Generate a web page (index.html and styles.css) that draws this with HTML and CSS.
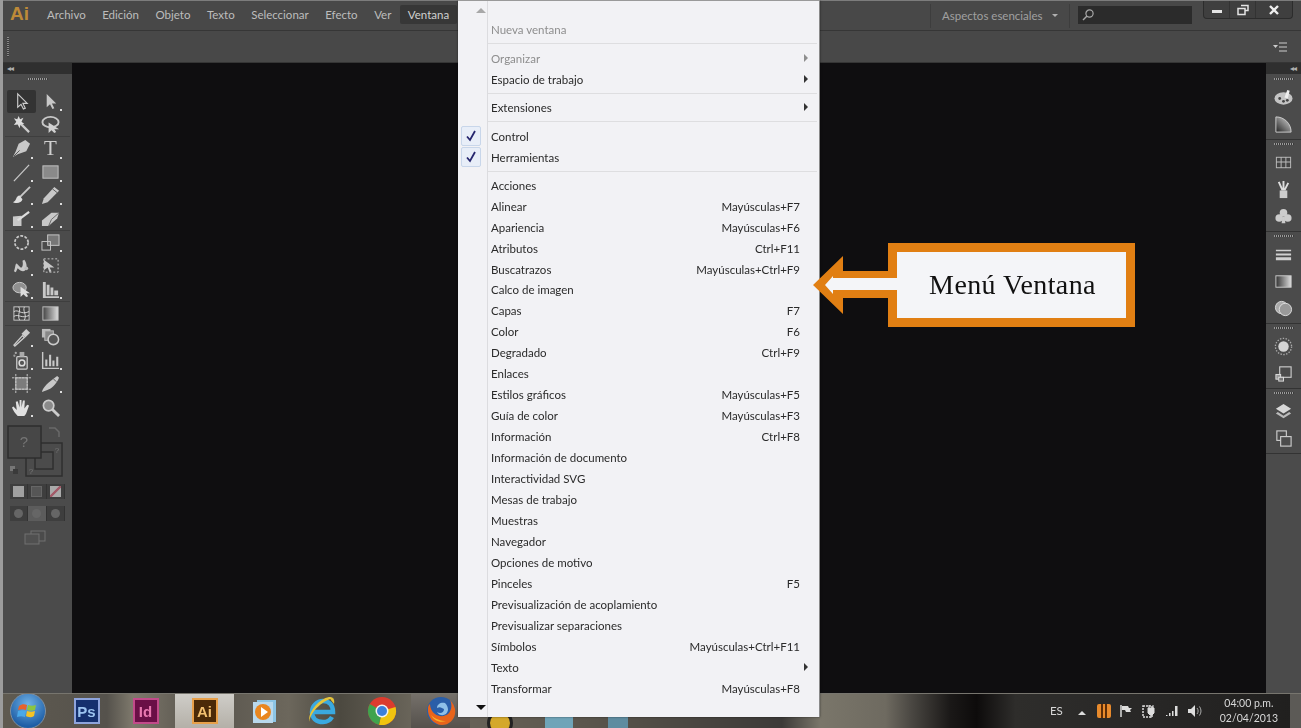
FILE: index.html
```html
<!DOCTYPE html>
<html lang="es">
<head>
    <meta charset="UTF-8">
    <meta name="viewport" content="width=device-width, initial-scale=1.0">
    <title>Menú Ventana</title>
    <link rel="stylesheet" href="styles.css">
</head>
<body>
    <div class="app">
        <header class="menubar">
            <span class="logo">Ai</span>
            <nav class="mainmenu">
                <span>Archivo</span>
                <span>Edición</span>
                <span>Objeto</span>
                <span>Texto</span>
                <span>Seleccionar</span>
                <span>Efecto</span>
                <span>Ver</span>
                <span class="open">Ventana</span>
            </nav>
            <div class="workspace-switch">
                <span>Aspectos esenciales</span>
                <i class="caret"></i>
            </div>
            <div class="search">
                <svg viewBox="0 0 14 14" width="14" height="14"><circle cx="8.5" cy="5.5" r="3.6" fill="none" stroke="#a8a8a8" stroke-width="1.2"/><path d="M6 8 2 12" stroke="#a8a8a8" stroke-width="1.5"/></svg>
            </div>
            <div class="winbtns">
                <span class="winbtn min"><svg viewBox="0 0 12 12" width="12" height="12"><rect x="1" y="6" width="10" height="3" fill="#e4e4e4"/></svg></span>
                <span class="winbtn max"><svg viewBox="0 0 12 12" width="12" height="12"><path d="M4 1.5h7v5H8.500M1 4.500h7v6H1z" fill="none" stroke="#e4e4e4" stroke-width="1.500"/></svg></span>
                <span class="winbtn close"><svg viewBox="0 0 12 12" width="12" height="12"><path d="M2 2l8 8M10 2l-8 8" stroke="#eee" stroke-width="2.400"/></svg></span>
            </div>
        </header>

        <div class="controlbar">
            <i class="vgrip"></i>
            <svg class="panelmenu" viewBox="0 0 14 10" width="14" height="10"><path d="M0 3h5L2.500 6z" fill="#ccc"/><path d="M6 1h8M6 5h8M6 9h8" stroke="#ccc"/></svg>
        </div>

        <div class="workspace">
            <aside class="tools">
                <div class="dockhead"><span>◂◂</span></div>
                <i class="grip"></i>
                <div class="toolgroup">
                    <span class="tool active"><svg viewBox="0 0 20 20"><path d="M6 2v14l3.500-3 2.500 5 2-1-2.500-5H16z" fill="none" stroke="#ccc" stroke-width="1.200"/></svg></span>
                    <span class="tool more"><svg viewBox="0 0 20 20"><path d="M6 2v14l3.500-3 2.500 5 2-1-2.500-5H16z" fill="#c8c8c8"/></svg></span>
                    <span class="tool"><svg viewBox="0 0 20 20"><path d="M8 8l10 10" stroke="#ccc" stroke-width="2.400"/><path d="M7 1l1.500 3.500L12 3l-2 4 3 2.500-4 .2L8 14 6 10l-4 .5L4.500 7 2 3.500l3.500 1z" fill="#ddd"/></svg></span>
                    <span class="tool"><svg viewBox="0 0 20 20"><ellipse cx="10" cy="7.500" rx="8.500" ry="5.500" fill="none" stroke="#c8c8c8" stroke-width="2"/><path d="M8 8v11l3-3 3 3 2-1-2-3h5z" fill="#d0d0d0"/></svg></span>
                </div>
                <div class="toolgroup">
                    <span class="tool more"><svg viewBox="0 0 20 20"><path d="M14 1l5 4-4 8-9 3-5 3 3-6 3-8z" fill="#c8c8c8"/><path d="M2 18l6-6" stroke="#555"/></svg></span>
                    <span class="tool more type-tool">T</span>
                    <span class="tool more"><svg viewBox="0 0 20 20"><path d="M2 19 18 2" stroke="#c8c8c8" stroke-width="1.300"/></svg></span>
                    <span class="tool more"><svg viewBox="0 0 20 20"><rect x="2" y="3" width="16" height="13" fill="#8a8a8a" stroke="#c4c4c4"/></svg></span>
                    <span class="tool more"><svg viewBox="0 0 20 20"><path d="M19 1 8 12" stroke="#c8c8c8" stroke-width="2"/><path d="M8 10c-4 0-3 6-7 7 4 2 9 1 10-3z" fill="#ddd"/></svg></span>
                    <span class="tool more"><svg viewBox="0 0 20 20"><path d="M14 1l5 4-12 12-6 2 2-6z" fill="#c8c8c8"/><path d="M12 3l5 4" stroke="#555"/></svg></span>
                    <span class="tool more"><svg viewBox="0 0 20 20"><path d="M1 8l9-1v11H1z" fill="#c8c8c8"/><path d="M6 12 18 3" stroke="#ddd" stroke-width="2.400"/></svg></span>
                    <span class="tool more"><svg viewBox="0 0 20 20"><path d="M1 12 11 4h8l-2 6-9 8H1z" fill="#c8c8c8"/><path d="M8 18l3-7 8-7" fill="none" stroke="#666"/></svg></span>
                </div>
                <div class="toolgroup">
                    <span class="tool more"><svg viewBox="0 0 20 20"><circle cx="10" cy="10" r="7" fill="none" stroke="#c8c8c8" stroke-width="1.800" stroke-dasharray="3 1.500"/></svg></span>
                    <span class="tool more"><svg viewBox="0 0 20 20"><rect x="7" y="2" width="12" height="11" fill="#777" stroke="#c8c8c8"/><rect x="1" y="9" width="9" height="9" fill="none" stroke="#c8c8c8"/></svg></span>
                    <span class="tool more"><svg viewBox="0 0 20 20"><path d="M2 16c2-4 1-8 3-8l4 4c2 1 3-3 2-7l2-1c3 4 3 9 1 11-2 2-5 1-8-2l-2 4z" fill="#c8c8c8"/><circle cx="15" cy="13" r="2" fill="#bbb"/></svg></span>
                    <span class="tool"><svg viewBox="0 0 20 20"><rect x="3" y="3" width="15" height="14" fill="none" stroke="#c8c8c8" stroke-dasharray="2 2"/><path d="M3 4v11l4-3 2 5 2-1-2-4h5z" fill="#c8c8c8"/></svg></span>
                    <span class="tool more"><svg viewBox="0 0 20 20"><ellipse cx="8" cy="8" rx="7" ry="5.500" fill="#8f8f8f" stroke="#ccc"/><path d="M9 7v11l3-3 3 3 2-1-2-3h4z" fill="#ddd"/></svg></span>
                    <span class="tool more"><svg viewBox="0 0 20 20"><path d="M2 2h3v15h14v2H2zM6 5h3v11H6zM10 8h3v8h-3zM14 11h4v5h-4z" fill="#c8c8c8"/></svg></span>
                </div>
                <div class="toolgroup">
                    <span class="tool"><svg viewBox="0 0 20 20"><rect x="2" y="3" width="16" height="14" fill="#444" stroke="#c8c8c8"/><path d="M2 8c5-3 7 4 16 0M2 13c5-3 8 3 16-1M7 3c3 4-2 8 1 14M13 3c-2 5 3 8 0 14" fill="none" stroke="#d8d8d8"/></svg></span>
                    <span class="tool"><svg viewBox="0 0 20 20"><defs><linearGradient id="gradTool"><stop offset="0" stop-color="#444"/><stop offset="1" stop-color="#ddd"/></linearGradient></defs><rect x="2" y="3" width="16" height="14" fill="url(#gradTool)" stroke="#c0c0c0"/></svg></span>
                </div>
                <div class="toolgroup">
                    <span class="tool more"><svg viewBox="0 0 20 20"><path d="M2 18l9-10 2 2-10 9z" fill="none" stroke="#ccc" stroke-width="1.400"/><path d="M10 6l5-5 4 4-5 5z" fill="#ccc"/></svg></span>
                    <span class="tool"><svg viewBox="0 0 20 20"><rect x="1" y="1" width="9" height="9" fill="#bbb"/><rect x="4" y="3" width="9" height="10" fill="#888" stroke="#bbb"/><circle cx="13" cy="12" r="5.500" fill="#555" stroke="#ccc" stroke-width="1.600"/></svg></span>
                    <span class="tool more"><svg viewBox="0 0 20 20"><rect x="5" y="6" width="11" height="13" rx="1" fill="#555" stroke="#ccc" stroke-width="1.300"/><circle cx="10.500" cy="12.500" r="3" fill="none" stroke="#ddd" stroke-width="1.600"/><path d="M8 1h5v5H8z" fill="#aaa"/><circle cx="4" cy="2" r="1.200" fill="#aaa"/><circle cx="2.500" cy="5" r="1.200" fill="#999"/></svg></span>
                    <span class="tool more"><svg viewBox="0 0 20 20"><path d="M1 1h1.500v16.500H19V19H1zM4.500 9h2.200v7H4.500zM8.500 4h2.200v12H8.500zM12 10h2.200v6H12zM16 6h2.200v10H16z" fill="#c8c8c8"/></svg></span>
                    <span class="tool"><svg viewBox="0 0 20 20"><rect x="4" y="4" width="12" height="12" fill="#7c7c7c" stroke="#bbb"/><path d="M4 0v20M16 0v20M0 4h20M0 16h20" stroke="#c8c8c8" stroke-dasharray="2.500 1"/></svg></span>
                    <span class="tool more"><svg viewBox="0 0 20 20"><path d="M1 19c1-5 6-10 16-17l2 2c-3 7-8 12-13 13z" fill="#c8c8c8"/><path d="M13 5l3 3" stroke="#555"/></svg></span>
                    <span class="tool more"><svg viewBox="0 0 20 20"><path d="M6 19c-2-2-5-6-6-9l1.500-1 3.500 3.500L4 4l2-.5L8 10V2h2v8l1.500-7.500h2L13 11l3-4 2 1-3 8c-1 2-2 3-3 3z" fill="#e0e0e0"/></svg></span>
                    <span class="tool"><svg viewBox="0 0 20 20"><circle cx="8" cy="8" r="5.500" fill="#8a8a8a" stroke="#ccc" stroke-width="1.800"/><path d="M12 12l7 7" stroke="#ccc" stroke-width="3"/></svg></span>
                </div>
                <div class="colorbox">
                    <svg viewBox="0 0 60 56" width="60" height="56">
                        <rect x="19" y="18" width="36" height="33" fill="none" stroke="#2f2f2f" stroke-width="1.500"/>
                        <rect x="28" y="27" width="18" height="17" fill="none" stroke="#2f2f2f" stroke-width="1.500"/>
                        <rect x="1" y="1" width="33" height="32" fill="#474747" stroke="#2e2e2e" stroke-width="1.500"/>
                        <text x="17" y="22" text-anchor="middle" class="unknown">?</text>
                        <text x="24" y="49" text-anchor="middle" class="unknown small">?</text>
                        <text x="50" y="28" text-anchor="middle" class="unknown small">?</text>
                        <rect x="3" y="41" width="5" height="5" fill="#777"/><rect x="6" y="44" width="5" height="5" fill="#3a3a3a"/>
                        <path d="M42 3h6l4 4v5" fill="none" stroke="#6a6a6a" stroke-width="1.500"/>
                    </svg>
                </div>
                <div class="btnrow colors">
                    <span><i class="sw fill"></i></span>
                    <span><i class="sw grad"></i></span>
                    <span><i class="sw none"></i></span>
                </div>
                <div class="btnrow modes">
                    <span><i class="dot"></i></span>
                    <span class="on"><i class="dot"></i></span>
                    <span><i class="dot"></i></span>
                </div>
                <div class="screenmode">
                    <svg viewBox="0 0 22 16" width="22" height="16"><rect x="7" y="1" width="14" height="10" fill="none" stroke="#707070"/><rect x="1" y="4" width="14" height="10" fill="#505050" stroke="#707070"/></svg>
                </div>
            </aside>

            <main class="canvas"></main>

            <aside class="dock">
                <div class="dockhead right"><span>◂◂</span></div>
                <section class="dockgroup first">
                    <i class="grip"></i>
                    <span class="dockicon"><svg viewBox="0 0 20 20"><ellipse cx="10" cy="11" rx="9.500" ry="6.500" fill="#c4c4c4"/><circle cx="6" cy="11" r="1.500" fill="#444"/><circle cx="10" cy="14" r="1.500" fill="#444"/><circle cx="14" cy="13" r="1.500" fill="#444"/><path d="M11 10l3-8 2.500 1-2 8z" fill="#eee"/></svg></span>
                    <span class="dockicon"><svg viewBox="0 0 20 20"><defs><linearGradient id="swGrad" x1="0" y1="1" x2="1" y2="0"><stop offset="0" stop-color="#222"/><stop offset="1" stop-color="#ddd"/></linearGradient></defs><path d="M2 2c9 0 16 7 16 16H2z" fill="url(#swGrad)" stroke="#d0d0d0"/></svg></span>
                </section>
                <section class="dockgroup">
                    <i class="grip"></i>
                    <span class="dockicon"><svg viewBox="0 0 20 20"><rect x="2" y="4" width="16" height="12" fill="#bbb"/><path d="M3 5h4v4H3zM8 5h4v4H8zM13 5h4v4h-4zM3 10h4v5H3zM8 10h4v5H8zM13 10h4v5h-4z" fill="#444"/></svg></span>
                    <span class="dockicon"><svg viewBox="0 0 20 20"><rect x="6" y="11" width="8" height="8" fill="#ccc"/><path d="M9 11 5 2M10 11V1M11 11l4-8" stroke="#ddd" stroke-width="2"/></svg></span>
                    <span class="dockicon"><svg viewBox="0 0 20 20"><circle cx="10" cy="6" r="4" fill="#ccc"/><circle cx="5.500" cy="11.500" r="4" fill="#ccc"/><circle cx="14.500" cy="11.500" r="4" fill="#ccc"/><path d="M9 10h2l1 7H8z" fill="#ccc"/></svg></span>
                </section>
                <section class="dockgroup">
                    <i class="grip"></i>
                    <span class="dockicon"><svg viewBox="0 0 20 20"><path d="M2 5h16v1.500H2zM2 9h16v2H2zM2 13h16v3H2z" fill="#d0d0d0"/></svg></span>
                    <span class="dockicon"><svg viewBox="0 0 20 20"><defs><linearGradient id="grPanel"><stop offset="0" stop-color="#333"/><stop offset="1" stop-color="#ddd"/></linearGradient></defs><rect x="2" y="4" width="16" height="12" fill="url(#grPanel)" stroke="#ccc"/></svg></span>
                    <span class="dockicon"><svg viewBox="0 0 20 20"><circle cx="8" cy="9" r="6.500" fill="#aaa" stroke="#ddd"/><circle cx="12" cy="11" r="6.500" fill="#999" stroke="#ddd"/></svg></span>
                </section>
                <section class="dockgroup">
                    <i class="grip"></i>
                    <span class="dockicon"><svg viewBox="0 0 20 20"><circle cx="10" cy="10" r="5.500" fill="#d4d4d4"/><circle cx="10" cy="10" r="8.500" fill="none" stroke="#aaa" stroke-width="1.400" stroke-dasharray="1.500 1.500"/></svg></span>
                    <span class="dockicon"><svg viewBox="0 0 20 20"><rect x="6" y="3" width="12" height="11" fill="none" stroke="#ccc" stroke-width="1.200"/><rect x="2" y="11" width="5" height="5" fill="#999" stroke="#ddd"/><rect x="5" y="14" width="5" height="4" fill="#777" stroke="#ddd"/></svg></span>
                </section>
                <section class="dockgroup">
                    <i class="grip"></i>
                    <span class="dockicon"><svg viewBox="0 0 20 20"><path d="M10 2l8 5-8 5-8-5z" fill="#d8d8d8"/><path d="M4 10.500l6 4 6-4 2 1.500-8 5-8-5z" fill="#bbb"/></svg></span>
                    <span class="dockicon"><svg viewBox="0 0 20 20"><rect x="3" y="2" width="10" height="10" fill="none" stroke="#ccc" stroke-width="1.200"/><rect x="7" y="8" width="11" height="10" fill="#4c4c4c" stroke="#ccc" stroke-width="1.200"/></svg></span>
                </section>
            </aside>
        </div>

        <footer class="taskbar">
            <span class="slot start"><span class="orb"><svg viewBox="0 0 24 24" width="24" height="24"><path d="M3 7c3-2 5-2 8-1l-1 5c-3-1-5-1-8 0z" fill="#e8622a"/><path d="M12 6c3 1 5 1 8 0l-1 5c-3 1-5 1-8 0z" fill="#8cc63f"/><path d="M2 12c3-1 5-1 8 0l-1 6c-3-1-5-1-8 0z" fill="#4aa8e8"/><path d="M11 12c3 1 5 1 8 0l-1 5c-3 2-6 1-8 0z" fill="#f5c324"/></svg></span></span>
            <span class="slot"><span class="appicon ps">Ps</span></span>
            <span class="slot"><span class="appicon id">Id</span></span>
            <span class="slot active"><span class="appicon ai">Ai</span></span>
            <span class="slot"><svg viewBox="0 0 28 28" width="28" height="28"><rect x="7" y="3" width="19" height="22" fill="#8cc4e4"/><rect x="3" y="5" width="20" height="21" fill="#b9d8ec"/><circle cx="13" cy="15" r="8" fill="#e9861f"/><path d="M11 10l7 5-7 5z" fill="#fff"/></svg></span>
            <span class="slot"><svg viewBox="0 0 32 32" width="32" height="32"><path d="M6 17h20c0-7-4-11-10-11S5 11 5 17s4 10 11 10c4 0 7-1.500 9-5" fill="none" stroke="#3aa9e0" stroke-width="4.500"/><path d="M3 27C1 22 12 6 27 3c-6 0-3 2 0 6 1-5-1-7-5-7C11 4-1 20 3 27z" fill="#e6c53c"/></svg></span>
            <span class="slot"><svg viewBox="0 0 30 30" width="30" height="30"><circle cx="15" cy="15" r="14" fill="#dc3b2e"/><path d="M15 15 28.500 11A14 14 0 0 1 12 28.700z" fill="#f1c40f"/><path d="M15 15 12 28.700A14 14 0 0 1 2.800 8z" fill="#3fa34d"/><circle cx="15" cy="15" r="6.500" fill="#f2f2f2"/><circle cx="15" cy="15" r="5" fill="#3d7fd9"/></svg></span>
            <span class="slot active dim"><svg viewBox="0 0 32 32" width="32" height="32"><circle cx="16" cy="16" r="14" fill="#2a5ea8"/><path d="M20 8c-4-1-8 1-8 5 3-2 5 0 7 1 0 4-4 5-7 3 3 5 10 4 11-2 0-3-1-5-3-7z" fill="#8fc0e8"/><path d="M3 13C2 22 9 30 17 30c7 0 12-5 13-11 1-5-1-10-5-14 2 4 2 9-1 13-4 4-10 4-14 1-3-2-5-6-5-10-1 1-2 2-2 4z" fill="#e8641b"/><path d="M6 20c3 6 9 8 15 6-5 0-11-2-15-6z" fill="#f6b42c"/></svg></span>
            <span class="slot"><span class="yellowdisc"></span></span>
            <span class="slot"><span class="folded"></span></span>
            <span class="slot"><span class="folded pale"></span></span>
            <div class="tray">
                <span class="lang">ES</span>
                <i class="up"></i>
                <span class="pause"></span>
                <svg viewBox="0 0 14 14" width="14" height="14"><path d="M2 1v12" stroke="#ddd" stroke-width="1.500"/><path d="M3 2h6l1 2h3l-2 2 1 2H7L6 6H3z" fill="#ddd"/></svg>
                <svg viewBox="0 0 16 16" width="16" height="16"><rect x="2" y="3" width="9" height="11" fill="none" stroke="#ddd" stroke-width="1.500" stroke-dasharray="2 1"/><path d="M7 5h6v5l-2 2H9L7 10zM8 2v3M12 2v3M10 12v3" fill="#ddd" stroke="#ddd"/></svg>
                <svg viewBox="0 0 14 12" width="14" height="12"><path d="M1 10h1.500v1H1zM4 8h1.500v3H4zM7 6h1.500v5H7zM10 1h2.500v10H10z" fill="#ddd"/></svg>
                <svg viewBox="0 0 16 14" width="16" height="14"><path d="M1 5h3l4-4v12L4 9H1z" fill="#ddd"/><path d="M10 4c1.500 2 1.500 4 0 6M12.500 2.500c2 3 2 6 0 9" fill="none" stroke="#aaa"/></svg>
                <div class="clock"><span>04:00 p.m.</span><span>02/04/2013</span></div>
            </div>
            <span class="showdesk"></span>
        </footer>
    </div>

    <div class="winmenu">
        <div class="scroll up-arrow"><i></i></div>
        <div class="item off"><span></span><span>Nueva ventana</span></div>
        <hr>
        <div class="item off"><span></span><span>Organizar</span><span></span><i class="sub"></i></div>
        <div class="item"><span></span><span>Espacio de trabajo</span><span></span><i class="sub"></i></div>
        <hr class="thin">
        <div class="item"><span></span><span>Extensiones</span><span></span><i class="sub"></i></div>
        <hr>
        <div class="item"><span class="check"><svg viewBox="0 0 12 12" width="12" height="12"><path d="M2 6.500 5 10 10 1" fill="none" stroke="#26266e" stroke-width="1.800"/></svg></span><span>Control</span></div>
        <div class="item"><span class="check"><svg viewBox="0 0 12 12" width="12" height="12"><path d="M2 6.500 5 10 10 1" fill="none" stroke="#26266e" stroke-width="1.800"/></svg></span><span>Herramientas</span></div>
        <hr class="thin">
        <div class="item"><span></span><span>Acciones</span></div>
        <div class="item"><span></span><span>Alinear</span><span>Mayúsculas+F7</span></div>
        <div class="item"><span></span><span>Apariencia</span><span>Mayúsculas+F6</span></div>
        <div class="item"><span></span><span>Atributos</span><span>Ctrl+F11</span></div>
        <div class="item"><span></span><span>Buscatrazos</span><span>Mayúsculas+Ctrl+F9</span></div>
        <div class="item"><span></span><span>Calco de imagen</span></div>
        <div class="item"><span></span><span>Capas</span><span>F7</span></div>
        <div class="item"><span></span><span>Color</span><span>F6</span></div>
        <div class="item"><span></span><span>Degradado</span><span>Ctrl+F9</span></div>
        <div class="item"><span></span><span>Enlaces</span></div>
        <div class="item"><span></span><span>Estilos gráficos</span><span>Mayúsculas+F5</span></div>
        <div class="item"><span></span><span>Guía de color</span><span>Mayúsculas+F3</span></div>
        <div class="item"><span></span><span>Información</span><span>Ctrl+F8</span></div>
        <div class="item"><span></span><span>Información de documento</span></div>
        <div class="item"><span></span><span>Interactividad SVG</span></div>
        <div class="item"><span></span><span>Mesas de trabajo</span></div>
        <div class="item"><span></span><span>Muestras</span></div>
        <div class="item"><span></span><span>Navegador</span></div>
        <div class="item"><span></span><span>Opciones de motivo</span></div>
        <div class="item"><span></span><span>Pinceles</span><span>F5</span></div>
        <div class="item"><span></span><span>Previsualización de acoplamiento</span></div>
        <div class="item"><span></span><span>Previsualizar separaciones</span></div>
        <div class="item"><span></span><span>Símbolos</span><span>Mayúsculas+Ctrl+F11</span></div>
        <div class="item"><span></span><span>Texto</span><span></span><i class="sub"></i></div>
        <div class="item"><span></span><span>Transformar</span><span>Mayúsculas+F8</span></div>
        <div class="scroll down-arrow"><i></i></div>
    </div>

    <div class="callout">
        <svg viewBox="0 0 322 84" width="322" height="84">
            <path d="M0 42 30 13V28H75V0H322V84H75V55H30V71Z" fill="#e17f13"/>
            <path d="M12 42 20 33V35H84V9H313V75H84V47H20V51Z" fill="#f4f5f8"/>
        </svg>
        <span class="calloutlabel">Menú Ventana</span>
    </div>
</body>
</html>
```

FILE: styles.css
```css
* {
    box-sizing: border-box;
}
html, body {
    margin: 0;
    height: 100%;
}
body {
    width: 1301px;
    height: 728px;
    overflow: hidden;
    position: relative;
    padding-left: 3px;
    background-color: #9c9c9c;
    font-family: Lato, "Noto Sans", sans-serif;
    font-size: 11.5px;
}
.app {
    height: 728px;
    display: flex;
    flex-direction: column;
    filter: blur(0.4px);
}

/* top bars */
.menubar {
    height: 31px;
    display: flex;
    align-items: center;
    background-color: #484848;
    border-top: 1px solid #7c7c7c;
    border-bottom: 1px solid #363636;
    color: #bdbdbd;
}
.logo {
    width: 44px;
    padding-left: 7px;
    margin-top: -4px;
    color: #bd8a38;
    font-family: "Liberation Sans", sans-serif;
    font-size: 19px;
    font-weight: bold;
}
.mainmenu {
    display: flex;
    align-items: center;
    gap: 16.5px;
    margin-top: -2px;
}
.mainmenu .open {
    margin-left: -8px;
    padding: 3px 8px;
    background-color: #373737;
    border-radius: 2px;
    color: #d0d0d0;
}
.workspace-switch {
    margin-left: auto;
    display: flex;
    align-items: center;
    width: 140px;
    height: 24px;
    padding-left: 11px;
    border-left: 1px solid #3d3d3d;
    border-right: 1px solid #3d3d3d;
    color: #a0a0a0;
    white-space: nowrap;
}
.caret {
    margin-left: 9px;
    border: 3px solid transparent;
    border-top-color: #b0b0b0;
    margin-top: 3px;
}
.search {
    width: 114px;
    height: 18px;
    margin-left: 8px;
    padding: 2px 0 0 3px;
    background-color: #2b2b2b;
    margin-top: -1px;
}
.winbtns {
    display: flex;
    align-self: flex-start;
    height: 18px;
    margin: 0 8px 0 11px;
    background-color: #3f3f3f;
    border: 1px solid #2c2c2c;
    border-top: 0;
    border-radius: 0 0 4px 4px;
}
.winbtn {
    display: flex;
    align-items: center;
    justify-content: center;
}
.min { width: 25px; }
.max { width: 27px; border-left: 1px solid #333; border-right: 1px solid #333; }
.close { width: 36px; }
.controlbar {
    height: 32px;
    display: flex;
    align-items: center;
    justify-content: space-between;
    padding: 0 14px 0 4px;
    background-color: #484848;
    border-bottom: 1px solid #353535;
}
.vgrip {
    width: 2px;
    height: 20px;
    background: repeating-linear-gradient(#888 0 1px, #3a3a3a 1px 2px);
}

/* workspace */
.workspace {
    flex: 1;
    min-height: 0;
    display: flex;
}
.canvas {
    flex: 1;
    background-color: #0f0e10;
}
.tools {
    width: 69px;
    background-color: #4b4b4b;
    display: flex;
    flex-direction: column;
}
.dockhead {
    height: 11px;
    background-color: #2f2f2f;
    color: #b0b0b0;
    font-size: 8px;
    line-height: 11px;
    padding-left: 4px;
    letter-spacing: -1px;
}
.dockhead.right {
    text-align: right;
    padding: 0 5px 0 0;
}
.grip {
    display: block;
    width: 20px;
    height: 2px;
    margin: 4px auto;
    background: repeating-linear-gradient(90deg, #9a9a9a 0 1px, #3a3a3a 1px 2px);
}
.toolgroup {
    display: grid;
    grid-template-columns: 29px 29px;
    grid-auto-rows: 23.2px;
    margin: 0 2px;
    padding-left: 2px;
    border-top: 1px solid #3e3e3e;
}
.tools .grip + .toolgroup {
    border-top: 0;
    margin-top: 6px;
}
.tool {
    position: relative;
    display: flex;
    align-items: center;
    justify-content: center;
}
.tool svg {
    width: 19px;
    height: 19px;
}
.tool.active {
    background-color: #333;
    border-radius: 2px;
}
.tool.more::after {
    content: "";
    position: absolute;
    right: 3px;
    bottom: 2px;
    width: 2px;
    height: 2px;
    background-color: #ddd;
}
.type-tool {
    color: #cfcfcf;
    font-family: "Liberation Serif", serif;
    font-size: 21px;
}
.colorbox {
    margin: 6px 0 0 4px;
    height: 56px;
}
.unknown {
    fill: #757575;
    font-family: "Liberation Sans", sans-serif;
    font-size: 15px;
}
.unknown.small {
    font-size: 8px;
}
.btnrow {
    display: flex;
    margin: 3px 0 0 7px;
    width: 55px;
    height: 15px;
    background-color: #3e3e3e;
}
.btnrow span {
    flex: 1;
    display: flex;
    align-items: center;
    justify-content: center;
    border-right: 1px solid #333;
}
.btnrow.modes {
    margin-top: 7px;
}
.btnrow.modes .on {
    background-color: #5c5c5c;
}
.sw {
    width: 11px;
    height: 11px;
}
.sw.fill { background-color: #a0a0a0; }
.sw.grad { background-color: #565656; border: 1px solid #666; }
.sw.none { background: linear-gradient(135deg, #aaa 40%, #a25a68 45% 55%, #aaa 60%); }
.dot {
    width: 9px;
    height: 9px;
    border-radius: 50%;
    background-color: #666;
}
.screenmode {
    margin: 9px 0 0 21px;
}
.dock {
    width: 35px;
    margin-left: auto;
    background-color: #4b4b4b;
}
.dockgroup {
    padding-bottom: 1px;
    border-bottom: 1px solid #333;
}
.dockgroup.first {
    padding-top: 1px;
}
.dockgroup .grip {
    margin: 3px auto 4px;
}
.dockicon {
    display: flex;
    align-items: center;
    justify-content: center;
    height: 27px;
}
.dockicon svg {
    width: 19px;
    height: 19px;
}

/* taskbar */
.taskbar {
    height: 35px;
    flex-shrink: 0;
    display: flex;
    align-items: center;
    overflow: hidden;
    border-top: 1px solid #77756e;
    background: linear-gradient(90deg, #5f5a50 0, #55524c 8%, #7e796c 10%, #57534c 15%, #6c675c 22%, #4c4940 26%, #6c675c 32%, #5a554c 45%, #3c3a38 60%, #7a766a 63%, #6e6a60 68%, #4a4742 70%, #1a1817 73%, #0d0b0b 75%, #2e2d2b 78%, #2a2928 85%, #201f1e 100%);
}
.slot {
    width: 59px;
    height: 34px;
    flex-shrink: 0;
    display: flex;
    align-items: center;
    justify-content: center;
}
.slot.start {
    width: 50px;
    margin-right: 4px;
}
.slot.active {
    background: linear-gradient(#cfcdc8, #b4b0a8);
}
.slot.active.dim {
    background: linear-gradient(#75706a, #55514c);
}
.orb {
    width: 36px;
    height: 36px;
    border-radius: 50%;
    display: flex;
    align-items: center;
    justify-content: center;
    background: radial-gradient(circle at 50% 30%, #6fb1e6, #1e5ea6 75%);
    border: 1px solid #7e8fa0;
}
.appicon {
    width: 26px;
    height: 26px;
    display: flex;
    align-items: center;
    justify-content: center;
    font-family: "Liberation Sans", sans-serif;
    font-size: 15px;
    font-weight: bold;
    border: 2px solid;
}
.ps { background-color: #15306e; border-color: #8ea4dc; color: #9cc4f0; }
.id { background-color: #6a0f46; border-color: #c24a8a; color: #e878b0; }
.ai { background-color: #4b2a08; border-color: #e8a04a; color: #f2c070; }
.yellowdisc {
    width: 26px;
    height: 26px;
    margin-top: 24px;
    border-radius: 50%;
    background-color: #d4a82a;
    border: 3px solid #222;
}
.folded {
    width: 28px;
    height: 12px;
    margin-top: 24px;
    background-color: #6fa4b8;
}
.folded.pale {
    width: 20px;
    background-color: #5f8ca0;
}
.tray {
    margin-left: auto;
    display: flex;
    align-items: center;
    gap: 8px;
    padding-right: 12px;
    color: #d8d8d8;
}
.lang {
    margin-right: 7px;
    margin-top: -2px;
}
.up {
    border: 4px solid transparent;
    border-bottom-color: #ddd;
    border-top: 0;
    margin-right: 3px;
    margin-top: 3px;
}
.pause {
    width: 14px;
    height: 14px;
    border-radius: 2px;
    background: linear-gradient(90deg, #e88a2c 0 4px, #5a2c08 4px 6px, #e88a2c 6px 8px, #5a2c08 8px 10px, #e88a2c 10px);
}
.clock {
    display: flex;
    flex-direction: column;
    align-items: center;
    margin-left: 9px;
    line-height: 15px;
    font-size: 10.5px;
}
.showdesk {
    width: 11px;
    height: 34px;
    flex-shrink: 0;
    background-color: #5c5a56;
}

/* window menu */
.winmenu {
    position: absolute;
    left: 458px;
    top: 0;
    width: 362px;
    height: 717px;
    padding-right: 2px;
    background: linear-gradient(90deg, transparent 29px, #dcdcdf 29px 30px, transparent 30px), #f2f2f5;
    border-top: 1px solid #9a9a9a;
    border-right: 1px solid #8a8a8a;
    box-shadow: 0 0 2px rgba(0, 0, 0, 0.5);
    color: #2a2a2a;
    filter: blur(0.3px);
}
.item {
    height: 20.96px;
    display: grid;
    grid-template-columns: 33px 1fr auto 17px;
    align-items: center;
}
.item.off {
    color: #8e8e8e;
}
.item.off .sub {
    border-left-color: #8e8e8e;
}
.check {
    width: 20px;
    height: 20px;
    margin-left: 3px;
    display: flex;
    align-items: center;
    justify-content: center;
    background-color: #e8eef8;
    border: 1px solid #c8d6ea;
    border-radius: 2px;
}
.sub {
    justify-self: end;
    margin-right: 9px;
    border: 4px solid transparent;
    border-left-color: #333;
    border-right: 0;
}
.winmenu hr {
    height: 8px;
    margin: 0 0 0 30px;
    border: 0;
    background: linear-gradient(#dedee0, #dedee0) center / 100% 1px no-repeat;
}
.winmenu hr.thin {
    height: 7px;
}
.scroll {
    height: 18px;
    width: 46px;
    display: flex;
    align-items: center;
    justify-content: center;
}
.up-arrow i {
    border: 5px solid transparent;
    border-bottom-color: #a8a8a8;
    border-top: 0;
}
.down-arrow {
    height: 18px;
}
.down-arrow i {
    border: 5px solid transparent;
    border-top-color: #111;
    border-bottom: 0;
}

/* callout */
.callout {
    position: absolute;
    left: 813px;
    top: 243px;
    width: 322px;
    height: 84px;
}
.callout svg {
    display: block;
}
.calloutlabel {
    position: absolute;
    left: 86px;
    right: 9px;
    top: 9px;
    bottom: 9px;
    display: flex;
    align-items: center;
    justify-content: center;
    color: #111;
    font-family: "Liberation Serif", serif;
    font-size: 28px;
    letter-spacing: 0.4px;
}
```
